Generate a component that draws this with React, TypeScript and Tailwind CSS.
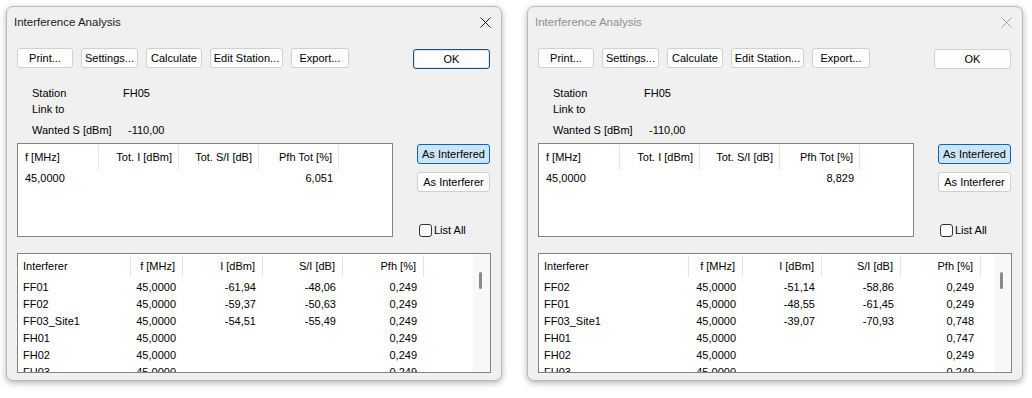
import React from "react";

type Row = [string, string, string, string, string];

interface DialogProps {
  active: boolean;
  pfhTot: string;
  widths: number[];
  rows: Row[];
}

const FONT = { fontFamily: '"Liberation Sans", Arial, sans-serif' };

const Btn = ({ label, w }: { label: string; w: number }) => (
  <div
    className="flex h-[20px] items-center justify-center rounded-[3px] border border-[#d0d0d0] bg-[#fdfdfd] text-[11px] text-black"
    style={{ width: w }}
  >
    {label}
  </div>
);

const CloseX = ({ color }: { color: string }) => (
  <svg width="11" height="11" viewBox="0 0 11 11">
    <path d="M0.5 0.5 L10.5 10.5 M10.5 0.5 L0.5 10.5" stroke={color} strokeWidth="1" />
  </svg>
);

const Dialog = ({ active, pfhTot, widths, rows }: DialogProps) => {
  const heads = ["Interferer", "f [MHz]", "I [dBm]", "S/I [dB]", "Pfh [%]"];
  return (
    <div
      className="flex h-[375px] w-[496px] shrink-0 flex-col rounded-[7px] border border-[#b9b9b9] bg-[#f0f0f0] shadow-[0_2px_6px_rgba(0,0,0,0.3)]"
      style={FONT}
    >
      {/* title bar */}
      <div className="flex h-[31px] items-center justify-between pl-[7px] pr-[10px]">
        <span className={`text-[11.5px] ${active ? "text-[#1a1a1a]" : "text-[#8f8f8f]"}`}>
          Interference Analysis
        </span>
        <CloseX color={active ? "#1a1a1a" : "#a0a0a0"} />
      </div>

      <div className="flex flex-1 flex-col px-[10px] pt-[10px]">
        {/* toolbar */}
        <div className="flex items-start gap-[8px]">
          <Btn label="Print..." w={56} />
          <Btn label="Settings..." w={57} />
          <Btn label="Calculate" w={56} />
          <Btn label="Edit Station..." w={73} />
          <Btn label="Export..." w={58} />
          <div
            className={`ml-auto mr-[1px] mt-[1px] flex h-[20px] w-[77px] items-center justify-center rounded-[3px] bg-[#fdfdfd] text-[11px] text-black ${
              active ? "border border-[#1f4f7a] shadow-[inset_0_0_0_1px_#dbe6f0]" : "border border-[#d0d0d0]"
            }`}
          >
            OK
          </div>
        </div>

        {/* station info */}
        <div className="mt-[16px] pl-[15px] text-[11px] leading-[16px] text-black">
          <div className="flex">
            <span className="w-[91px]">Station</span>
            <span>FH05</span>
          </div>
          <div>Link to</div>
          <div className="mt-[5px] flex">
            <span className="w-[96px]">Wanted S [dBm]</span>
            <span>-110,00</span>
          </div>
        </div>

        {/* totals + side buttons */}
        <div className="mt-[5px] flex">
          <div className="h-[94px] w-[376px] border border-[#838383] bg-white text-[11px] text-black">
            <div className="flex h-[26px] items-center">
              <div className="flex h-[25px] w-[81px] items-center border-r border-[#e5e5e5] pl-[7px]">f [MHz]</div>
              {["Tot. I [dBm]", "Tot. S/I [dB]", "Pfh Tot [%]"].map((h) => (
                <div key={h} className="flex h-[25px] w-[80px] items-center justify-end border-r border-[#e5e5e5] pr-[6px]">
                  {h}
                </div>
              ))}
            </div>
            <div className="flex h-[17px] items-center">
              <div className="w-[81px] pl-[7px]">45,0000</div>
              <div className="w-[80px]" />
              <div className="w-[80px]" />
              <div className="w-[80px] pr-[6px] text-right">{pfhTot}</div>
            </div>
          </div>

          <div className="ml-auto mr-[1px] flex w-[73px] flex-col text-[11px] text-black">
            <div className="mt-[1px] flex h-[20px] items-center justify-center rounded-[3px] border border-[#0067c0] bg-[#cce4f7]">
              As Interfered
            </div>
            <div className="mt-[8px] flex h-[20px] items-center justify-center rounded-[3px] border border-[#d0d0d0] bg-[#fdfdfd]">
              As Interferer
            </div>
            <div className="mt-[30px] flex items-center pl-[2px]">
              <div className="h-[13px] w-[13px] rounded-[3px] border border-[#333] bg-white" />
              <span className="ml-[2px]">List All</span>
            </div>
          </div>
        </div>

        {/* interferer list */}
        <div className="relative mt-[14px] h-[120px] w-[474px] overflow-hidden border border-[#838383] bg-white text-[11px] text-black">
          <div className="flex h-[25px] items-center">
            {heads.map((h, i) => (
              <div
                key={h}
                className={`flex h-[22px] shrink-0 items-center border-r border-[#e5e5e5] ${
                  i === 0 ? "pl-[5px]" : "justify-end pr-[7px]"
                }`}
                style={{ width: widths[i] }}
              >
                {h}
              </div>
            ))}
          </div>
          {rows.map((r) => (
            <div key={r[0]} className="flex h-[17px] items-center">
              {r.map((c, i) => (
                <div
                  key={i}
                  className={`shrink-0 ${i === 0 ? "pl-[5px]" : "pr-[7px] text-right"}`}
                  style={{ width: widths[i] }}
                >
                  {c}
                </div>
              ))}
            </div>
          ))}
          <div className="absolute right-0 top-0 h-full w-[17px] bg-[#f8f8f8]">
            <div className="ml-[6px] mt-[18px] h-[17px] w-[3px] rounded-full bg-[#8a8a8a]" />
          </div>
        </div>
      </div>
    </div>
  );
};

const leftRows: Row[] = [
  ["FF01", "45,0000", "-61,94", "-48,06", "0,249"],
  ["FF02", "45,0000", "-59,37", "-50,63", "0,249"],
  ["FF03_Site1", "45,0000", "-54,51", "-55,49", "0,249"],
  ["FH01", "45,0000", "", "", "0,249"],
  ["FH02", "45,0000", "", "", "0,249"],
  ["FH03", "45,0000", "", "", "0,249"],
];

const rightRows: Row[] = [
  ["FF02", "45,0000", "-51,14", "-58,86", "0,249"],
  ["FF01", "45,0000", "-48,55", "-61,45", "0,249"],
  ["FF03_Site1", "45,0000", "-39,07", "-70,93", "0,748"],
  ["FH01", "45,0000", "", "", "0,747"],
  ["FH02", "45,0000", "", "", "0,249"],
  ["FH03", "45,0000", "", "", "0,249"],
];

export default function App() {
  return (
    <div className="flex h-[398px] w-[1032px] gap-[25px] bg-white pl-[6px] pt-[6px]">
      <Dialog active pfhTot="6,051" widths={[113, 52, 80, 80, 81]} rows={leftRows} />
      <Dialog active={false} pfhTot="8,829" widths={[150, 54, 79, 79, 80]} rows={rightRows} />
    </div>
  );
}
